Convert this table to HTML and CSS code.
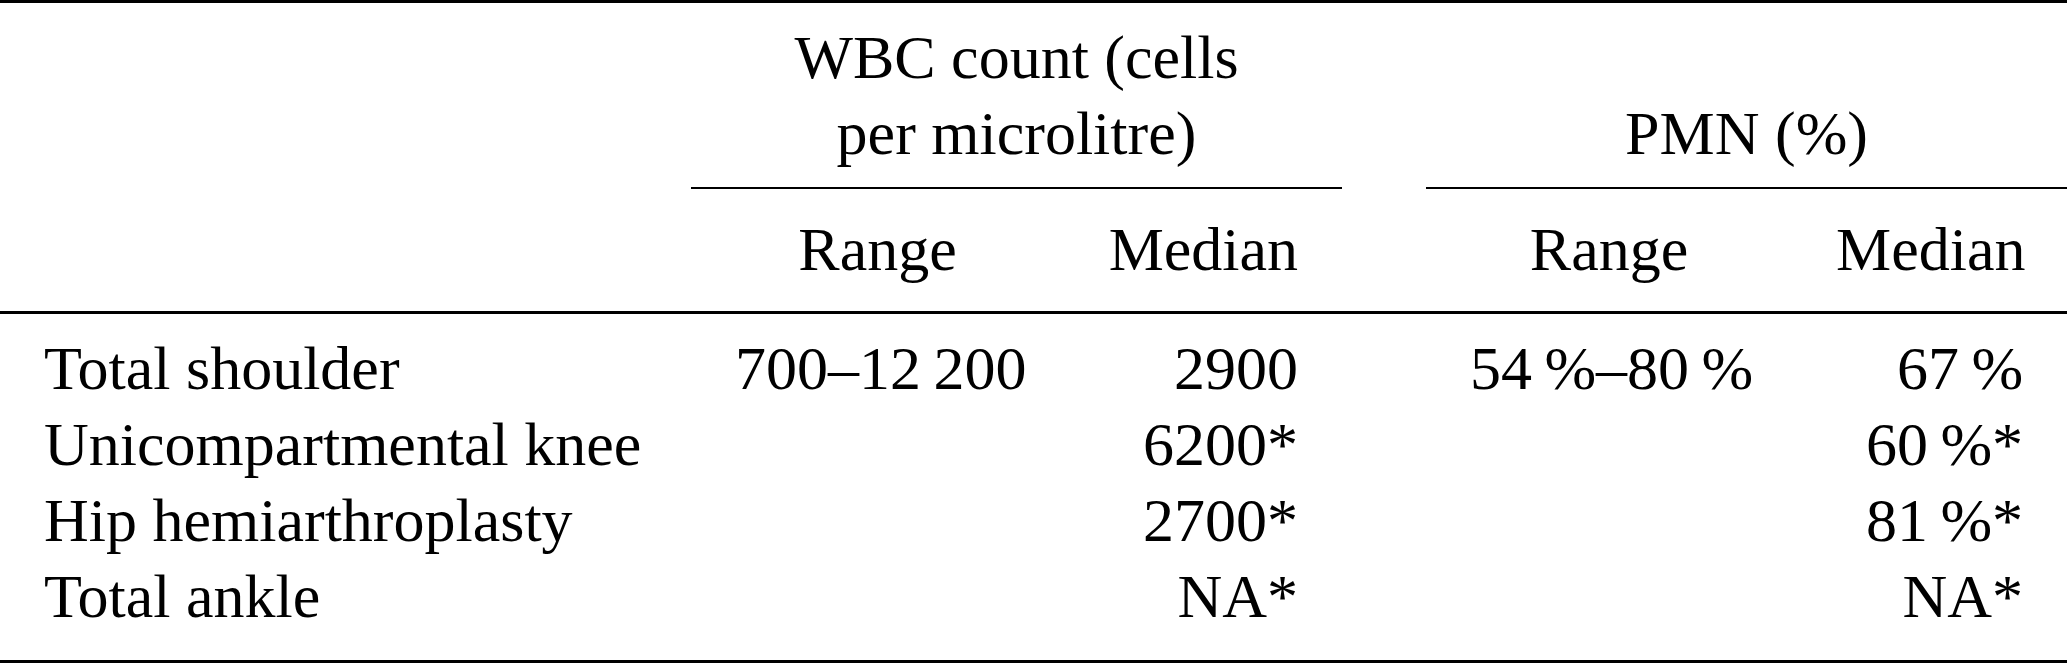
FILE: index.html
```html
<!DOCTYPE html>
<html lang="en">
<head>
  <meta charset="UTF-8" />
  <meta name="viewport" content="width=device-width, initial-scale=1.0" />
  <title>Synovial fluid WBC and PMN</title>
  <link rel="stylesheet" href="styles.css">
</head>
<body>
  <table class="results">
    <colgroup>
      <col class="c-label">
      <col class="c-range">
      <col class="c-median">
      <col class="c-gap">
      <col class="c-prange">
      <col class="c-pmedian">
    </colgroup>
    <thead>
      <tr class="group-row">
        <th></th>
        <th class="group" colspan="2">WBC count (cells<br>per microlitre)</th>
        <th></th>
        <th class="group" colspan="2">PMN (%)</th>
      </tr>
      <tr class="sub-row">
        <th></th>
        <th class="center">Range</th>
        <th class="right">Median</th>
        <th></th>
        <th class="center">Range</th>
        <th class="right">Median</th>
      </tr>
    </thead>
    <tbody>
      <tr class="first">
        <td>Total shoulder</td>
        <td class="center">700–12&#8201;200</td>
        <td class="right">2900</td>
        <td></td>
        <td class="center">54&#8201;%–80&#8201;%</td>
        <td class="right">67&#8201;%</td>
      </tr>
      <tr>
        <td>Unicompartmental knee</td>
        <td class="center"></td>
        <td class="right">6200*</td>
        <td></td>
        <td class="center"></td>
        <td class="right">60&#8201;%*</td>
      </tr>
      <tr>
        <td>Hip hemiarthroplasty</td>
        <td class="center"></td>
        <td class="right">2700*</td>
        <td></td>
        <td class="center"></td>
        <td class="right">81&#8201;%*</td>
      </tr>
      <tr class="last">
        <td>Total ankle</td>
        <td class="center"></td>
        <td class="right">NA*</td>
        <td></td>
        <td class="center"></td>
        <td class="right">NA*</td>
      </tr>
    </tbody>
  </table>
</body>
</html>
```

FILE: styles.css
```css
body {
  margin: 0;
  background: #fff;
  color: #000;
  font-family: 'Liberation Serif', 'Times New Roman', serif;
}
.results {
  width: 2067px;
  table-layout: fixed;
  border-collapse: separate;
  border-spacing: 0;
  font-size: 62px;
  line-height: 76px;
}
.c-label { width: 691px; }
.c-range { width: 373px; }
.c-median { width: 278px; }
.c-gap { width: 84px; }
.c-prange { width: 366px; }
.c-pmedian { width: 275px; }
.results th,
.results td {
  padding: 0 44px;
  font-weight: normal;
  text-align: left;
  white-space: nowrap;
  vertical-align: bottom;
}
.results .center { text-align: center; }
.results .right { text-align: right; }
.results .group { text-align: center; }
.group-row th {
  border-top: 3px solid #000;
  padding-top: 16px;
  padding-bottom: 16px;
}
.group-row th.group {
  border-bottom: 2px solid #000;
}
.sub-row th {
  padding-top: 22px;
  padding-bottom: 24px;
  border-bottom: 3px solid #000;
}
.results tbody tr.first td { padding-top: 16px; }
.results tbody tr.last td {
  padding-bottom: 26px;
  border-bottom: 3px solid #000;
}
```
